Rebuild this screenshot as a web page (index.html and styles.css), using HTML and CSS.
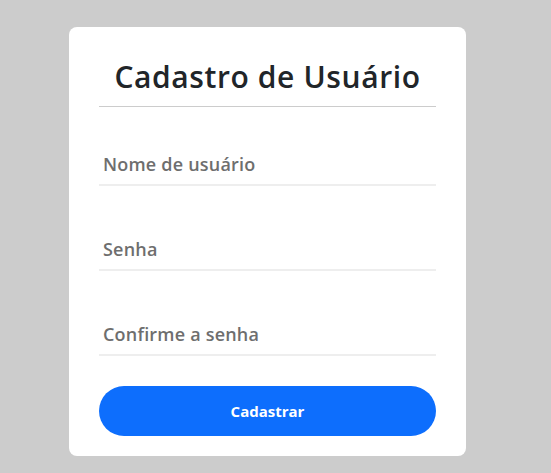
FILE: index.html
```html
<!DOCTYPE html>
<html lang="pt-BR">
<head>
<meta charset="utf-8">
<title>Cadastro de Usuário</title>
<link rel="stylesheet" href="styles.css">
</head>
<body>
<main class="card">
  <h1 class="title">Cadastro de Usuário</h1>
  <form class="form">
    <div class="field"><input class="input" type="text" placeholder="Nome de usuário"></div>
    <div class="field"><input class="input" type="password" placeholder="Senha"></div>
    <div class="field"><input class="input" type="password" placeholder="Confirme a senha"></div>
    <button class="btn" type="button">Cadastrar</button>
  </form>
</main>
</body>
</html>
```
FILE: styles.css
```css
* { box-sizing: border-box; }
html, body { margin: 0; padding: 0; }
body {
  background: #cccccc;
  font-family: "Open Sans", "Noto Sans", sans-serif;
  min-height: 473px;
  padding: 27px 0 0 69px;
}
.card {
  width: 397px;
  height: 429px;
  background: #ffffff;
  border-radius: 8px;
  padding: 32px 30px 20px;
}
.title {
  margin: 0;
  font-size: 30px;
  line-height: 36px;
  font-weight: 600;
  letter-spacing: 0.6px;
  color: #212529;
  text-align: center;
  padding-bottom: 11px;
  border-bottom: 1px solid #cccccc;
}
.form {
  display: flex;
  flex-direction: column;
}
.field { margin-top: 39px; }
.field + .field { margin-top: 45px; }
.input {
  display: block;
  width: 100%;
  height: 40px;
  border: none;
  border-bottom: 2px solid #eeeeee;
  outline: none;
  padding: 0 4px 3px;
  font-family: inherit;
  font-size: 18px;
  font-weight: 600;
  letter-spacing: 0.2px;
  color: #333;
  background: transparent;
}
.input::placeholder { color: #6e6e6e; opacity: 1; }
.btn {
  margin-top: 30px;
  height: 50px;
  border: none;
  border-radius: 25px;
  background: #0d6efd;
  color: #ffffff;
  font-family: inherit;
  font-size: 15px;
  font-weight: 700;
}
```
